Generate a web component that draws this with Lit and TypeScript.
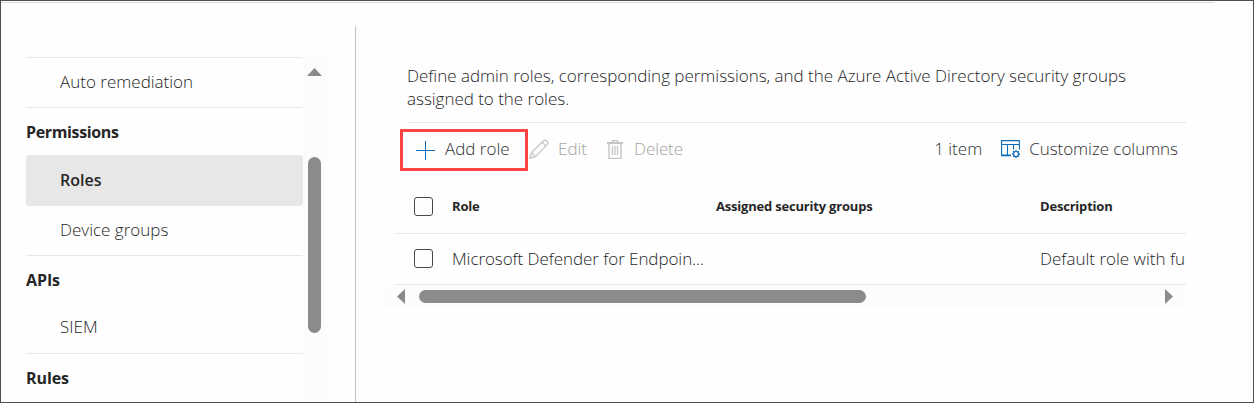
import { LitElement, html, css, svg } from "lit";
import { customElement } from "lit/decorators.js";

@customElement("side-nav")
class SideNav extends LitElement {
  static styles = css`
    :host { display: flex; width: 300px; height: 346px; overflow: hidden; }
    .list { width: 277px; padding-top: 2px; box-sizing: border-box; flex: none; }
    .item { box-sizing: border-box; height: 50px; padding-left: 34px; line-height: 48px; border-bottom: 1px solid #e6e6e6; border-radius: 2px; }
    .first { border-top: 1px solid #e6e6e6; height: 51px; }
    .head { height: 48px; line-height: 49px; font-weight: 700; font-size: 16px; letter-spacing: -0.1px; }
    .short { height: 47px; letter-spacing: -0.36px; }
    .sel { height: 51px; background: #e7e7e7; border: 0; border-radius: 3px; font-weight: 600; font-size: 16px; line-height: 51px; }
    .siem { line-height: 45px; }
    .bar { width: 23px; background: #fcfcfc; display: flex; flex-direction: column; align-items: center; padding-top: 13px; box-sizing: border-box; }
    .bar svg { display: block; flex: none; }
    .thumb { margin-top: 81px; width: 13px; height: 176px; border-radius: 7px; background: #8b8b8b; flex: none; }
  `;
  render() {
    return html`
      <div class="list">
        <div class="item first">Auto remediation</div>
        <div class="head short">Permissions</div>
        <div class="item sel">Roles</div>
        <div class="item">Device groups</div>
        <div class="head">APIs</div>
        <div class="item siem">SIEM</div>
        <div class="head">Rules</div>
      </div>
      <div class="bar">
        <svg width="15" height="8"><path d="M0 8L7.5 0L15 8Z" fill="#8b8b8b" /></svg>
        <div class="thumb"></div>
      </div>`;
  }
}

@customElement("role-toolbar")
class RoleToolbar extends LitElement {
  static styles = css`
    :host { display: flex; height: 54px; align-items: flex-start; color: #303030; }
    svg { display: block; flex: none; }
    .add { box-sizing: border-box; margin: 6px 0 0 -7px; width: 128px; height: 42px; border: 3px solid #fc4444; display: flex; align-items: center; padding-left: 13px; gap: 10px; flex: none; line-height: 34px; }
    .cmd { display: flex; align-items: center; height: 36px; margin-top: 8px; white-space: nowrap; }
    .add span, .cmd span { margin-top: -2px; }
    .off { color: #a3a3a3; }
    .edit { gap: 9px; width: 78px; padding-left: 1px; }
    .del { gap: 11px; letter-spacing: -0.1px; }
    .right { margin-left: auto; }
    .cols { margin: 8px 8px 0 19px; gap: 9px; letter-spacing: -0.04px; }
  `;
  render() {
    return html`
      <div class="add">
        <svg width="19" height="19"><path d="M0 9.5H19M9.5 0V19" stroke="#0f6cb8" fill="none" /></svg>
        <span>Add role</span>
      </div>
      <div class="cmd off edit">
        <svg width="20" height="20" viewBox="0 0 20 20" fill="none" stroke="#c6c6c6" stroke-width="1.3">
          <path d="M.8 19.2L2.6 13.6L14.6 1.6Q16.4 .4 18 2Q19.6 3.6 18.4 5.4L6.4 17.6ZM13 3.2L16.8 7M2.6 13.6L6.4 17.6" />
        </svg>
        <span>Edit</span>
      </div>
      <div class="cmd off del">
        <svg width="16" height="19" viewBox="0 0 16 19" fill="none" stroke="#c6c6c6">
          <path d="M0 3H16" stroke-width="2" /><path d="M5.5 2V.5H10.5V2M2 4V18.5H14V4" stroke-width="1.4" />
          <path d="M5.5 6V15M8 6V15M10.5 6V15" stroke-width="1.3" />
        </svg>
        <span>Delete</span>
      </div>
      <div class="cmd right"><span>1 item</span></div>
      <div class="cmd cols">
        <svg width="19" height="18" viewBox="0 0 19 18" fill="none" stroke="#0f6cb8">
          <path d="M10 15.4H.6V.6H18.4V9.5M.6 4.5H18.4M6.5 4.5V15.4M12.5 4.5V9.5" stroke-width="1.1" />
          <path d="M0 15.5H10" stroke-width="1.6" />
          <circle cx="15" cy="14" r="2.5" stroke-width="1.2" />
          ${[0, 45, 90, 135, 180, 225, 270, 315].map(a => svg`<path d="M15 11.4V9.9" stroke-width="1.3" transform="rotate(${a} 15 14)" />`)}
        </svg>
        <span>Customize columns</span>
      </div>`;
  }
}

@customElement("role-table")
class RoleTable extends LitElement {
  static styles = css`
    :host { display: block; margin-left: -22px; }
    .row { display: grid; grid-template-columns: 19px 283px 324px 1fr; box-sizing: border-box; margin-left: 10px; padding: 0 0 2px 19px; align-items: center; border-bottom: 1px solid #e6e6e6; white-space: nowrap; overflow: hidden; height: 51px; }
    .head { font-weight: 700; font-size: 13px; height: 57px; padding: 2px 0 0 19px; letter-spacing: -0.2px; }
    .box { box-sizing: border-box; width: 19px; height: 19px; border: 1px solid #484848; border-radius: 3px; }
    .name { padding-left: 19px; }
    .n1 { letter-spacing: -0.07px; }
    .cell { overflow: hidden; }
    .bar { height: 23px; background: #fcfcfc; display: flex; align-items: center; padding: 0 13px 0 12px; }
    .bar svg { display: block; }
    .thumb { width: 447px; height: 13px; border-radius: 7px; background: #8b8b8b; margin: 0 auto 0 14px; }
  `;
  render() {
    return html`
      <div class="row head">
        <div class="box"></div><div class="name">Role</div><div>Assigned security groups</div><div>Description</div>
      </div>
      <div class="row">
        <div class="box"></div><div class="name n1">Microsoft Defender for Endpoin...</div><div></div><div class="cell">Default role with fu</div>
      </div>
      <div class="bar">
        <svg width="8" height="15"><path d="M8 0L0 7.5L8 15Z" fill="#8b8b8b" /></svg>
        <div class="thumb"></div>
        <svg width="8" height="15"><path d="M0 0L8 7.5L0 15Z" fill="#8b8b8b" /></svg>
      </div>`;
  }
}

@customElement("app-root")
class AppRoot extends LitElement {
  static styles = css`
    :host { display: block; box-sizing: border-box; width: 1254px; height: 403px; border: 1px solid #514c4e; background: #fefefe; overflow: hidden; font: 300 17px/23px "Open Sans", sans-serif; color: #262626; }
    .top { width: 1213px; height: 1px; margin-top: 1px; background: #e0d9de; }
    .page { display: flex; }
    side-nav { margin: 52px 29px 0 25px; flex: none; }
    main { box-sizing: border-box; margin-top: 23px; border-left: 1px solid #c4c4c4; height: 376px; width: 831px; padding: 38px 0 0 51px; }
    p { margin: 0; height: 58px; border-bottom: 1px solid #e6e6e6; white-space: nowrap; letter-spacing: -0.025px; }
  `;
  render() {
    return html`
      <div class="top"></div>
      <div class="page">
        <side-nav></side-nav>
        <main>
          <p>Define admin roles, corresponding permissions, and the Azure Active Directory security groups<br />assigned to the roles.</p>
          <role-toolbar></role-toolbar>
          <role-table></role-table>
        </main>
      </div>`;
  }
}
